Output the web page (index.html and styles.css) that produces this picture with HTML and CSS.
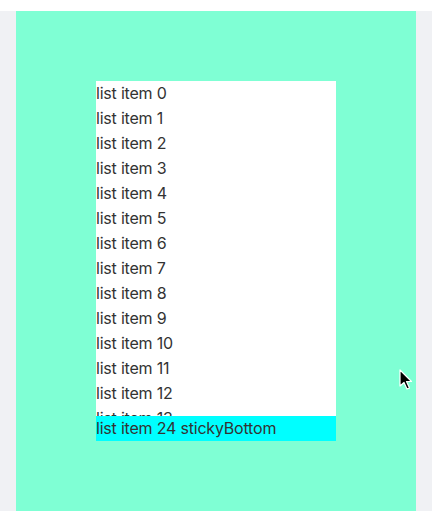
FILE: index.html
```html
<!DOCTYPE html>
<html lang="en">
  <head>
    <meta charset="UTF-8" />
    <meta name="viewport" content="width=device-width, initial-scale=1.0" />
    <title>Sticky list</title>
    <link rel="stylesheet" href="styles.css">
  </head>
  <body>
    <div class="page">
      <div class="box">
        <div class="list">
          <div class="item">list item 0</div>
          <div class="item">list item 1</div>
          <div class="item">list item 2</div>
          <div class="item">list item 3</div>
          <div class="item">list item 4</div>
          <div class="item">list item 5</div>
          <div class="item">list item 6</div>
          <div class="item">list item 7</div>
          <div class="item">list item 8</div>
          <div class="item">list item 9</div>
          <div class="item">list item 10</div>
          <div class="item">list item 11</div>
          <div class="item">list item 12</div>
          <div class="item">list item 13</div>
          <div class="item">list item 14</div>
          <div class="item">list item 15</div>
          <div class="item">list item 16</div>
          <div class="item">list item 17</div>
          <div class="item">list item 18</div>
          <div class="item">list item 19</div>
          <div class="item">list item 20</div>
          <div class="item">list item 21</div>
          <div class="item">list item 22</div>
          <div class="item">list item 23</div>
          <div class="item sticky">list item 24 stickyBottom</div>
        </div>
      </div>
    </div>

    <svg class="cursor" width="14" height="22" viewBox="0 0 14 22">
      <path d="M1 1 L1 17 L5 13.5 L8 20 L10.5 19 L7.5 12.5 L12.5 12.5 Z" fill="#000" stroke="#fff" stroke-width="1.2" stroke-linejoin="round" />
    </svg>
  </body>
</html>
```

FILE: styles.css
```css
body {
  margin: 0;
  background: #fff;
  font-family: Inter, "Liberation Sans", sans-serif;
  color: #333;
}
.page {
  margin-top: 11px;
  height: 500px;
  padding: 0 16px;
  background-color: #f0f1f4;
}
.box {
  box-sizing: border-box;
  height: 500px;
  padding: 70px 80px;
  background-color: aquamarine;
}
.list {
  width: 240px;
  height: 360px;
  overflow: auto;
  background: white;
  scrollbar-width: none;
}
.list::-webkit-scrollbar {
  display: none;
}
.item {
  height: 25px;
  line-height: 25px;
  font-size: 16px;
  letter-spacing: -0.2px;
  white-space: nowrap;
}
.sticky {
  position: sticky;
  bottom: 0;
  background-color: cyan;
}
.cursor {
  position: absolute;
  left: 399px;
  top: 369px;
}
```
